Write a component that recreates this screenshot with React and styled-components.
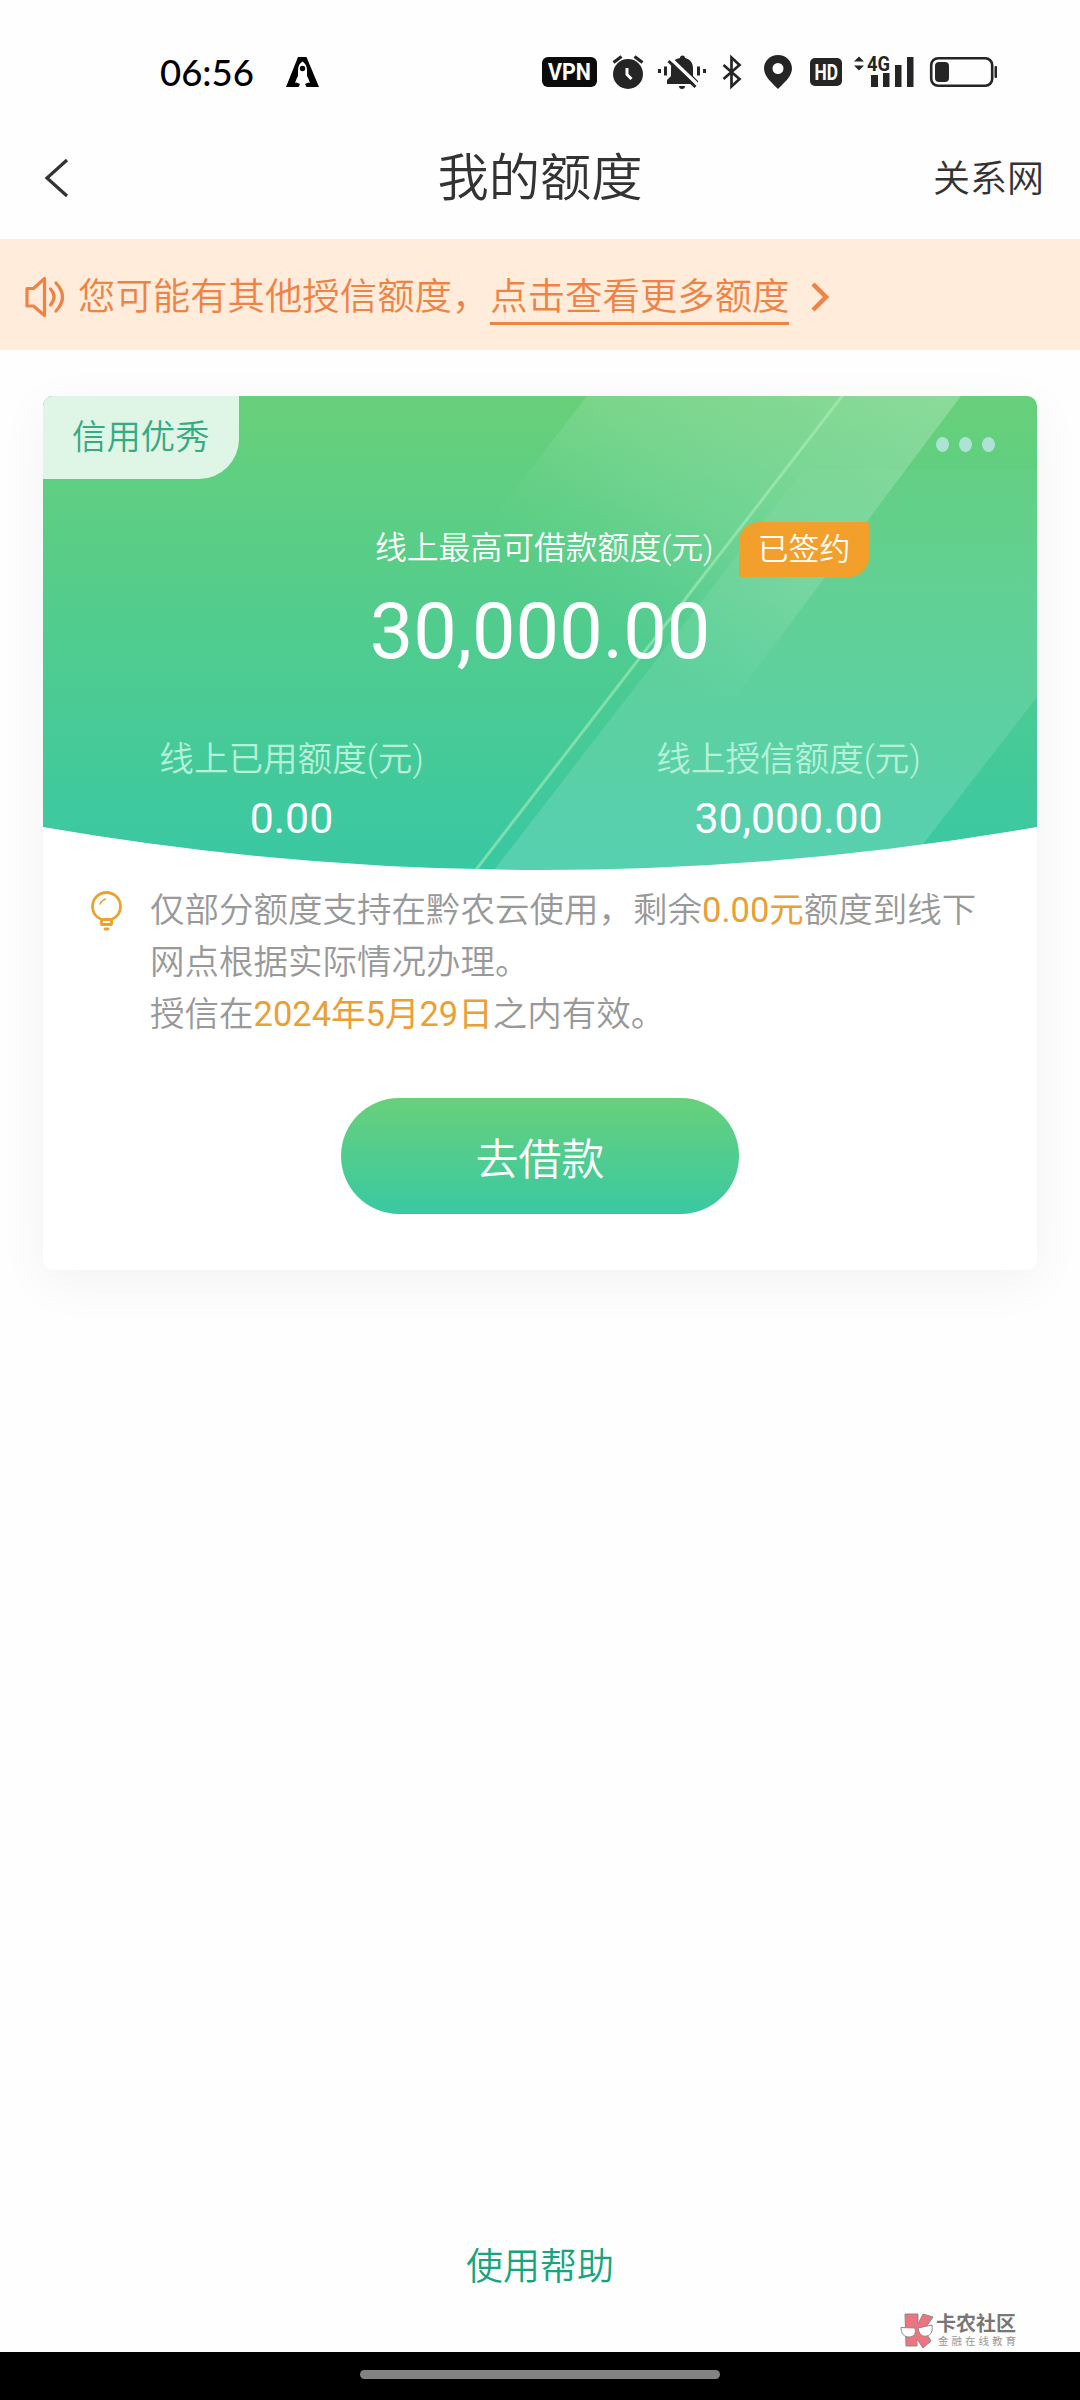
import React from 'react';
import styled, { createGlobalStyle } from 'styled-components';

const GlobalStyle = createGlobalStyle`
  * {
    box-sizing: border-box;
  }
  body {
    margin: 0;
    background: #fefefe;
    font-family: Roboto, 'Noto Sans CJK SC', sans-serif;
    color: #333;
  }
  svg {
    display: block;
    flex: none;
    overflow: visible;
  }
`;

const Page = styled.div`
  display: flex;
  flex-direction: column;
  width: 1080px;
  height: 2400px;
  overflow: hidden;
`;

const StatusBar = styled.div`
  display: flex;
  align-items: center;
  height: 116px;
  padding: 28px 83px 0 160px;
`;

const Clock = styled.span`
  width: 126px;
  font-family: Lato, sans-serif;
  font-size: 36.5px;
  font-weight: 500;
  line-height: 36px;
  color: #000;
`;

const StatusIcons = styled.div`
  display: flex;
  align-items: center;
  margin-left: auto;
`;

const StatusIcon = styled.svg`
  margin-right: ${props => props.$gap}px;
`;

const Header = styled.header`
  display: grid;
  grid-template-columns: 1fr auto 1fr;
  align-items: center;
  height: 123px;
  padding: 0 36px 0 43px;
`;

const Title = styled.h1`
  margin: 0 7px 0 0;
  padding-top: 3px;
  font-size: 51.3px;
  font-weight: 350;
  line-height: 76px;
`;

const HeaderLink = styled.span`
  justify-self: end;
  padding-bottom: 4px;
  font-size: 37px;
  font-weight: 350;
`;

const Notice = styled.div`
  display: flex;
  align-items: center;
  height: 111px;
  padding: 4px 0 0 24px;
  background: #ffecdb;
  color: #ee8345;
  font-size: 37.4px;
  font-weight: 350;
  line-height: 58px;
`;

const NoticeText = styled.span`
  margin-left: 13px;
`;

const NoticeLink = styled.span`
  height: 57px;
  margin: 0 21px 1px 1px;
  border-bottom: 3px solid #ee8345;
`;

const Card = styled.section`
  width: 994px;
  height: 874px;
  margin: 46px 43px 0;
  border-radius: 10px;
  background: #fff;
  box-shadow: 0 12px 50px rgba(0, 0, 0, 0.05);
`;

const CardHead = styled.div`
  position: relative;
  height: 474px;
  border-radius: 10px 10px 0 0;
  overflow: hidden;
`;

const Backdrop = styled.svg`
  position: absolute;
  top: 0;
  left: 0;
`;

const HeadContent = styled.div`
  position: relative;
  color: #fff;
`;

const TopLine = styled.div`
  display: flex;
  justify-content: space-between;
  height: 126px;
`;

const CreditTag = styled.div`
  width: 196px;
  height: 83px;
  padding-left: 29px;
  border-radius: 10px 0 40px 0;
  background: #dff5e5;
  color: #34ab83;
  font-size: 34.4px;
  font-weight: 350;
  line-height: 82px;
`;

const Dots = styled.div`
  display: flex;
  gap: 10px;
  padding: 41px 42px 0 0;
`;

const Dot = styled.i`
  width: 13px;
  height: 15px;
  border-radius: 50%;
  background: #ade2d5;
`;

const LimitLine = styled.div`
  display: flex;
  height: 55px;
  padding-left: 332px;
  font-weight: 350;
  white-space: nowrap;
`;

const LimitLabel = styled.span`
  width: 364px;
  font-size: 31.8px;
  line-height: 53px;
`;

const Signed = styled.span`
  width: 130px;
  height: 55px;
  border-radius: 20px 3px 20px 3px;
  background: #f39f2b;
  font-size: 30.8px;
  line-height: 55px;
  text-align: center;
`;

const Amount = styled.div`
  height: 90px;
  margin-top: 10px;
  font-size: 77.5px;
  line-height: 90px;
  text-align: center;
`;

const Columns = styled.div`
  display: grid;
  grid-template-columns: 1fr 1fr;
  margin-top: 56px;
  text-align: center;
`;

const ColumnLabel = styled.div`
  color: #b5f1d9;
  font-size: 34.6px;
  font-weight: 350;
  line-height: 52px;
`;

const ColumnValue = styled.div`
  margin-top: 7px;
  font-size: 42.8px;
  line-height: 52px;
`;

const Tips = styled.div`
  display: flex;
  padding: 15px 0 0 48px;
`;

const TipText = styled.p`
  width: 834px;
  margin: 0 0 0 28px;
  color: #999;
  font-size: 34.5px;
  font-weight: 350;
  line-height: 51.8px;
`;

const Highlight = styled.span`
  color: #e9a036;
  font-weight: 390;
`;

const BorrowButton = styled.button`
  display: block;
  width: 398px;
  height: 116px;
  margin: 58px auto 0;
  padding: 0 0 1px;
  border: 0;
  border-radius: 58px;
  background: linear-gradient(#68d07b, #39c9a2);
  color: #fff;
  font-family: inherit;
  font-size: 43px;
  font-weight: 350;
`;

const Footer = styled.footer`
  display: flex;
  flex-direction: column;
  align-items: center;
  height: 109px;
  margin-top: auto;
`;

const Help = styled.span`
  color: #17a57d;
  font-size: 37px;
  font-weight: 350;
  line-height: 50px;
`;

const Watermark = styled.div`
  display: flex;
  align-self: flex-end;
  gap: 2px;
  margin: 20px 61px 0 0;
`;

const WatermarkName = styled.div`
  color: #777;
  font-size: 20px;
  font-weight: 700;
  line-height: 22px;
`;

const WatermarkSub = styled.div`
  padding-left: 2px;
  color: #999;
  font-size: 10.5px;
  letter-spacing: 3px;
  line-height: 13px;
`;

const NavBar = styled.div`
  height: 48px;
  padding-top: 18px;
  background: #000;
`;

const NavPill = styled.div`
  width: 360px;
  height: 9px;
  margin: 0 auto;
  border-radius: 5px;
  background: #828282;
`;

const columns = [
  { id: 1, label: '线上已用额度(元)', value: '0.00' },
  { id: 2, label: '线上授信额度(元)', value: '30,000.00' },
];

const RocketIcon = () => (
  <svg width="33" height="30" viewBox="0 0 33 30">
    <path
      d="M12 0h8.500L33 30H20.500l-1.500-3 3.500-1.500 1.500.5-1.500-4-1.500-3v-6C21 9 19 6 16.500 4.500 14 6 12 9 12 13v6l-1.500 3L9 26l1.500-.5L14 27l-1.500 3H0z"
      fill="#000"
    />
    <circle cx="16.500" cy="11.500" r="2.700" fill="#000" />
  </svg>
);

const VpnIcon = () => (
  <StatusIcon $gap={15} width="55" height="30" viewBox="0 0 55 30">
    <rect width="55" height="30" rx="6" fill="#0b0b0b" />
    <text x="6" y="23" fontSize="23" fontWeight="700" textLength="43" lengthAdjust="spacingAndGlyphs" fill="#fff">VPN</text>
  </StatusIcon>
);

const AlarmIcon = () => (
  <StatusIcon $gap={14} width="32" height="34" viewBox="0 0 32 34">
    <circle cx="16" cy="19" r="15" fill="#252525" />
    <path d="M1.500 7.500 9.500 1.500M30.500 7.500l-8-6" stroke="#252525" strokeWidth="3.200" />
    <path d="M15 13v6.500l4.500 4.500" fill="none" stroke="#fff" strokeWidth="3" />
  </StatusIcon>
);

const MutedBellIcon = () => (
  <StatusIcon $gap={16} width="48" height="34" viewBox="0 0 48 34">
    <path d="M9 29v-4l4-4v-8c0-5 3-9 9-10a2.500 2.500 0 0 1 5 0c5 1 8 5 8 10v8l5 5v3z" fill="#252525" />
    <path d="M21 31h6a3 3 0 0 1-6 0z" fill="#252525" />
    <path d="M1.500 14v4M46.500 14v4M7.500 11.500v9M40.500 11.500v9" stroke="#252525" strokeWidth="3" />
    <path d="M12.500 3.500l27 26" stroke="#fff" strokeWidth="3.500" />
    <path d="M10.500 6l27 26" stroke="#252525" strokeWidth="3" />
  </StatusIcon>
);

const BluetoothIcon = () => (
  <StatusIcon $gap={22} width="20" height="34" viewBox="0 0 20 34">
    <path d="m1.500 10 16 14-8 7.500v-29l8 7.500-16 14" fill="none" stroke="#252525" strokeWidth="2.700" />
  </StatusIcon>
);

const PinIcon = () => (
  <StatusIcon $gap={18} width="28" height="34" viewBox="0 0 28 34">
    <path
      d="M14 0C6 0 0 6 0 13.500 0 22 9 28.500 14 34c5-5.500 14-12 14-20.500C28 6 22 0 14 0zm0 8a5.500 5.500 0 1 1 0 11 5.500 5.500 0 0 1 0-11z"
      fill="#252525"
    />
  </StatusIcon>
);

const HdIcon = () => (
  <StatusIcon $gap={12} width="32" height="28" viewBox="0 0 32 28">
    <rect width="32" height="28" rx="5" fill="#252525" />
    <text x="4.500" y="22" fontSize="22" fontWeight="700" textLength="23.500" lengthAdjust="spacingAndGlyphs" fill="#fff">HD</text>
  </StatusIcon>
);

const SignalIcon = () => (
  <StatusIcon $gap={15} width="61" height="34" viewBox="0 0 61 34">
    <path d="m0 6.500 5-5 5 5zM0 10.500l5 5 5-5z" fill="#252525" />
    <text x="13" y="16" fontSize="21" fontWeight="700" textLength="23" lengthAdjust="spacingAndGlyphs" fill="#252525">4G</text>
    <path d="M17 20h7v12h-7zM29 18h6.500v14H29zM41 10h6.500v22H41zM53 2h6.500v30H53z" fill="#252525" />
  </StatusIcon>
);

const BatteryIcon = () => (
  <svg width="67" height="32" viewBox="0 0 67 32">
    <rect x="1.200" y="2.200" width="61" height="27.600" rx="7" fill="none" stroke="#252525" strokeWidth="2.600" />
    <rect x="5" y="6" width="14" height="20" rx="4" fill="#252525" />
    <rect x="64.500" y="10" width="2.500" height="12" rx="1" fill="#252525" />
  </svg>
);

const BackIcon = () => (
  <svg width="26" height="40" viewBox="0 0 26 40">
    <path d="M24 2 4 20l20 18" fill="none" stroke="#333" strokeWidth="3.200" />
  </svg>
);

const SpeakerIcon = () => (
  <svg width="41" height="42" viewBox="0 0 41 42">
    <g fill="none" stroke="#ee8345" strokeWidth="3.200" strokeLinejoin="round" strokeLinecap="round">
      <path d="M3 12.500H9.500L20.500 2.500v37L9.500 30H3z" />
      <path d="M26.500 13q7 7.500 0 16M32 7q13 14 0 28" />
    </g>
  </svg>
);

const ArrowIcon = () => (
  <svg width="20" height="30" viewBox="0 0 20 30">
    <path d="m3 2 13 13L3 28" fill="none" stroke="#ee8345" strokeWidth="4.500" />
  </svg>
);

const BulbIcon = () => (
  <svg width="31" height="40" viewBox="0 0 31 40">
    <g transform="translate(0 6)" fill="none" stroke="#eda22e" strokeWidth="2.800" strokeLinecap="round" strokeLinejoin="round">
      <path d="M10.500 28.500C4.500 26 1.500 21 1.500 15.500a14 14 0 0 1 28 0c0 5.500-3 10.500-9 13v5h-10z" />
      <path d="M10.500 28.500h10M14 38h3" />
      <path d="M9 13q1.500-3.500 5.500-5" strokeWidth="1.500" />
    </g>
  </svg>
);

const CardBackdrop = () => (
  <Backdrop width="994" height="474" viewBox="0 0 994 474">
    <defs>
      <linearGradient id="base" x1="0" y1="0" x2="0" y2="1">
        <stop offset="0" stopColor="#68d07a" />
        <stop offset="1" stopColor="#39c8a3" />
      </linearGradient>
      <linearGradient id="upper" gradientUnits="userSpaceOnUse" x1="900" y1="0" x2="640" y2="300">
        <stop offset="0" stopColor="#fff" stopOpacity="0.23" />
        <stop offset="0.590" stopColor="#fff" stopOpacity="0.12" />
        <stop offset="0.850" stopColor="#fff" stopOpacity="0.03" />
        <stop offset="1" stopColor="#fff" stopOpacity="0" />
      </linearGradient>
      <linearGradient id="lower" x1="0" y1="0" x2="0" y2="1">
        <stop offset="0" stopColor="#fff" stopOpacity="0.02" />
        <stop offset="0.300" stopColor="#fff" stopOpacity="0.080" />
        <stop offset="1" stopColor="#fff" stopOpacity="0.15" />
      </linearGradient>
    </defs>
    <rect width="994" height="474" fill="url(#base)" />
    <path d="M544 0h374L693 300H313z" fill="url(#upper)" />
    <path d="M760 74H994V301L860 474H451z" fill="url(#lower)" />
    <path d="M800-1 432 475" stroke="#b0f0bc" strokeOpacity="0.550" strokeWidth="3" />
    <path d="M0 431Q497 517 994 431V474H0z" fill="#fff" />
  </Backdrop>
);

const WatermarkLogo = () => (
  <svg width="34" height="36" viewBox="0 0 34 36">
    <g stroke="#8a8a8a" strokeWidth="1">
      <path d="M5 1h13v10l5-10 10 3-9 13 7 11-8 7-6-9v7H6z" fill="#ee7580" />
      <path d="M1 14.500 15 15c1.500 6-1.500 9-6 9-5 0-8-3.500-8-9.500zM18 15l14-3c1 6-1 10-5 11-5 1-8-2-9-8z" fill="#fff" />
    </g>
  </svg>
);

const App = () => (
  <Page>
    <GlobalStyle />
    <StatusBar>
      <Clock>06:56</Clock>
      <RocketIcon />
      <StatusIcons>
        <VpnIcon />
        <AlarmIcon />
        <MutedBellIcon />
        <BluetoothIcon />
        <PinIcon />
        <HdIcon />
        <SignalIcon />
        <BatteryIcon />
      </StatusIcons>
    </StatusBar>
    <Header>
      <BackIcon />
      <Title>我的额度</Title>
      <HeaderLink>关系网</HeaderLink>
    </Header>
    <Notice>
      <SpeakerIcon />
      <NoticeText>您可能有其他授信额度，</NoticeText>
      <NoticeLink>点击查看更多额度</NoticeLink>
      <ArrowIcon />
    </Notice>
    <Card>
      <CardHead>
        <CardBackdrop />
        <HeadContent>
          <TopLine>
            <CreditTag>信用优秀</CreditTag>
            <Dots>
              <Dot />
              <Dot />
              <Dot />
            </Dots>
          </TopLine>
          <LimitLine>
            <LimitLabel>线上最高可借款额度(元)</LimitLabel>
            <Signed>已签约</Signed>
          </LimitLine>
          <Amount>30,000.00</Amount>
          <Columns>
            {columns.map(column => (
              <div key={column.id}>
                <ColumnLabel>{column.label}</ColumnLabel>
                <ColumnValue>{column.value}</ColumnValue>
              </div>
            ))}
          </Columns>
        </HeadContent>
      </CardHead>
      <Tips>
        <BulbIcon />
        <TipText>
          仅部分额度支持在黔农云使用，剩余<Highlight>0.00元</Highlight>额度到线下网点根据实际情况办理。
          <br />
          授信在<Highlight>2024年5月29日</Highlight>之内有效。
        </TipText>
      </Tips>
      <BorrowButton>去借款</BorrowButton>
    </Card>
    <Footer>
      <Help>使用帮助</Help>
      <Watermark>
        <WatermarkLogo />
        <div>
          <WatermarkName>卡农社区</WatermarkName>
          <WatermarkSub>金融在线教育</WatermarkSub>
        </div>
      </Watermark>
    </Footer>
    <NavBar>
      <NavPill />
    </NavBar>
  </Page>
);

export default App;
